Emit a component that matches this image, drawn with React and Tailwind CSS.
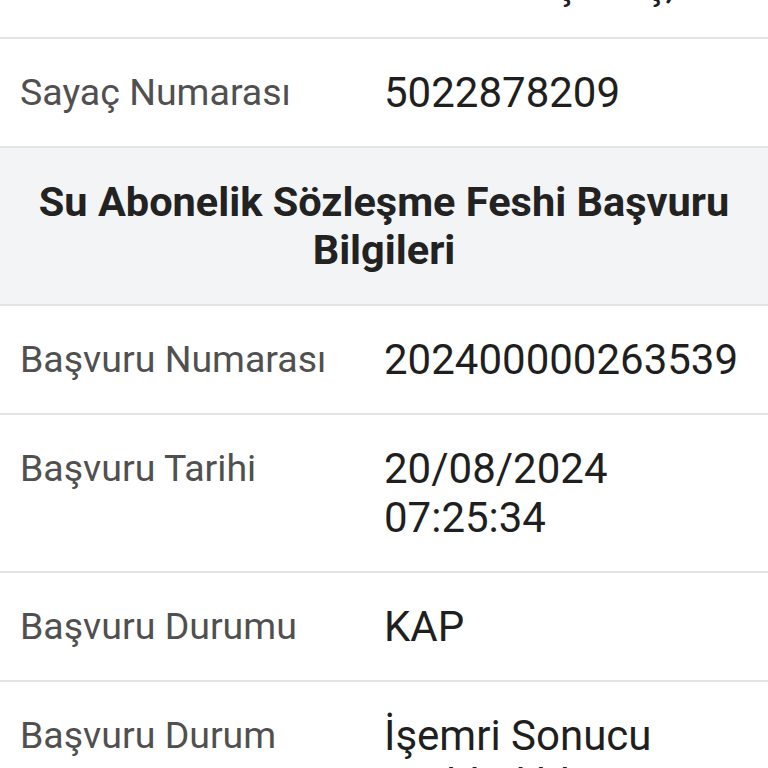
import React from "react";

const rowsTop = [
  { label: "Adres", value: "Sinanpaşa Mah. Ihlamurdere Cad. No:12 Beşiktaş," },
  { label: "Sayaç Numarası", value: "5022878209" },
];

const rowsBottom = [
  { label: "Başvuru Numarası", value: "202400000263539" },
  { label: "Başvuru Tarihi", value: "20/08/2024 07:25:34" },
  { label: "Başvuru Durumu", value: "KAP" },
  { label: "Başvuru Durum Açıklaması", value: "İşemri Sonucu Reddedildi" },
];

function Row({ label, value }) {
  return (
    <div className="grid grid-cols-[346px_1fr] gap-x-[18px] px-[20px] py-[29px] border-b-2 border-[#e4e4e4] bg-white">
      <div className="text-[37.5px] leading-[49px] text-[#505050]">{label}</div>
      <div className="text-[42px] leading-[49px] text-[#1f1f1f]">{value}</div>
    </div>
  );
}

export default function App() {
  return (
    <div className="h-[768px] overflow-hidden bg-white" style={{ fontFamily: "Roboto, 'Noto Sans', sans-serif" }}>
      <div className="mt-[-168px]">
        {rowsTop.map((r) => (
          <Row key={r.label} label={r.label} value={r.value} />
        ))}
        <div className="bg-[#f3f4f6] border-b-2 border-[#e4e4e4] px-[20px] pt-[30px] pb-[30px] text-center">
          <h2 className="text-[41.5px] leading-[48px] font-bold text-[#222222]">
            Su Abonelik Sözleşme Feshi Başvuru Bilgileri
          </h2>
        </div>
        {rowsBottom.map((r) => (
          <Row key={r.label} label={r.label} value={r.value} />
        ))}
      </div>
    </div>
  );
}
